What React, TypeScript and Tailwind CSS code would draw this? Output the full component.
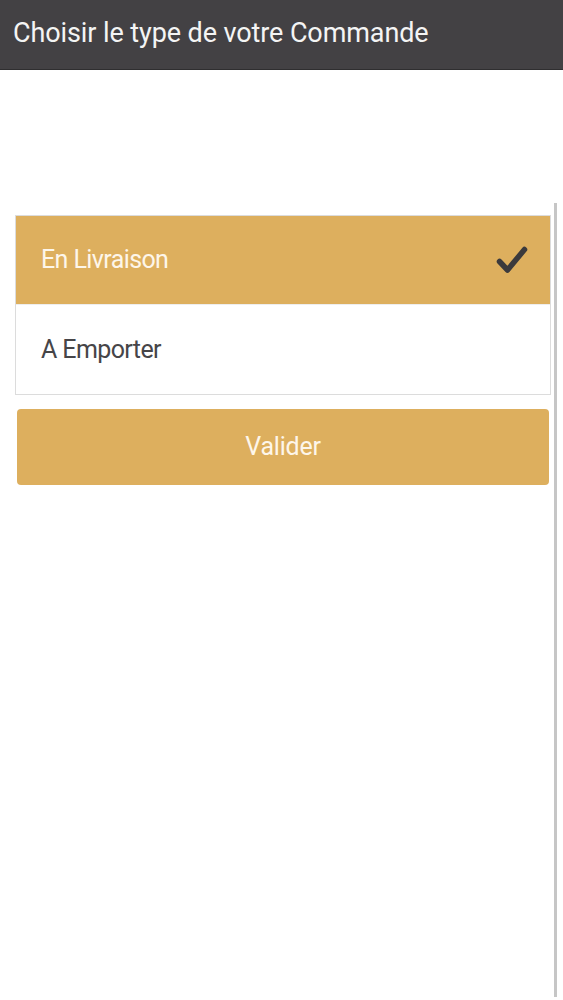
import { useState } from 'react';

const options = ['En Livraison', 'A Emporter'];

export default function App() {
  const [selected, setSelected] = useState(0);

  return (
    <div className="relative min-h-[1000px] bg-white font-['Roboto',sans-serif]">
      <header className="flex h-[70px] items-center border-b border-[#2f2e30] bg-[#434144] pb-[3px] pl-[13px]">
        <h1 className="text-[27px] font-normal tracking-[-0.1px] text-[#f4f4f4]">Choisir le type de votre Commande</h1>
      </header>

      <main className="pl-[15px] pr-[12px] pt-[145px]">
        <ul className="border border-[#dcdcdc]">
          {options.map((opt, i) => (
            <li
              key={opt}
              onClick={() => setSelected(i)}
              className={
                i === selected
                  ? 'flex h-[88px] cursor-pointer items-center justify-between bg-[#ddaf5e] pl-[25px] pr-[22px] text-[25px] tracking-[-0.6px] text-[#fdf6ea]'
                  : 'flex h-[90px] cursor-pointer items-center justify-between border-t border-[#eeeeee] bg-white pl-[25px] pr-[22px] text-[25px] tracking-[-0.6px] text-[#464548]'
              }
            >
              <span>{opt}</span>
              {i === selected && (
                <svg width="32" height="30" viewBox="0 0 32 30" fill="none">
                  <path d="M3.5 16.5 L11.5 25 L28.5 4.5" stroke="#3b3a3c" strokeWidth="5.5" strokeLinecap="round" strokeLinejoin="round" />
                </svg>
              )}
            </li>
          ))}
        </ul>

        <div className="px-[2px] pt-[14px]">
          <button className="h-[76px] w-full rounded-[4px] bg-[#ddaf5e] text-[25px] tracking-[-0.2px] text-[#fdf6ea]">
            Valider
          </button>
        </div>
      </main>

      {/* scrollbar */}
      <div className="absolute left-[554px] top-[203px] h-[794px] w-[3px] bg-[#c6c6c6]" />
    </div>
  );
}
